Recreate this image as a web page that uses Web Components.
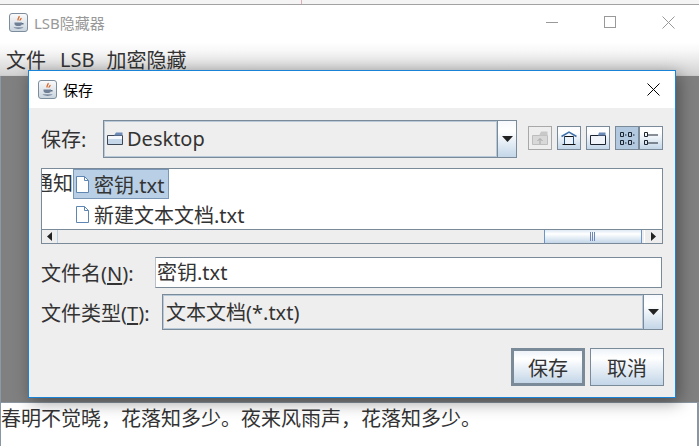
<!DOCTYPE html>
<html>
<head>
<meta charset="utf-8">
<title>LSB隐藏器</title>
<style>
  html, body { margin: 0; height: 100%; overflow: hidden; background: #fff; }
  body { font-family: "Noto Sans", "Noto Sans CJK SC", sans-serif; }
</style>
</head>
<body>
<lsb-window></lsb-window>

<script>
const JAVA_ICON = `
  <svg width="20" height="20" viewBox="0 0 20 20">
    <defs><linearGradient id="jg" x1="0" y1="0" x2="0" y2="1">
      <stop offset="0" stop-color="#fbfbfb"/><stop offset="1" stop-color="#c9d4de"/>
    </linearGradient></defs>
    <rect x="0.5" y="0.5" width="18" height="18" rx="2.5" fill="url(#jg)" stroke="#7d8d9d"/>
    <path d="M10 3c1 1.500-2 2.500-.8 4.500M12 5c.5 1-1.500 1.500-.8 2.700" fill="none" stroke="#d8662a" stroke-width="1.300"/>
    <path d="M5.500 9.500h7.500v1.200c0 1.600-1.400 2.300-3.700 2.300s-3.800-.7-3.800-2.300z" fill="#6f7f96"/>
    <path d="M13 10h1.500v1.500H13M4.500 14.500h10c-1 1.500-9 1.500-10 0z" fill="#5a6b85"/>
  </svg>`;

// title bar + menu bar + grey content + text area of the main window
class LsbWindow extends HTMLElement {
  constructor() {
    super();
    this.attachShadow({ mode: 'open' });
  }

  connectedCallback() {
    this.shadowRoot.innerHTML = `
      <style>
        :host { display: flex; flex-direction: column; height: 446px; position: relative; color: #333; }
        .strip { height: 4px; background: linear-gradient(#e3aab8, #e3aab8) 301px 0 / 1px 100% no-repeat #f4f4f4; border-bottom: 1px solid #a2a2a2; }
        .title { height: 37px; display: flex; align-items: center; padding: 0 2px 2px 9px; box-sizing: border-box; gap: 5px; background: #fff; color: #999; font-size: 15px; flex: none; }
        .title span { flex: 1; }
        .caps { display: flex; align-items: center; }
        .caps div { width: 58px; height: 30px; display: flex; align-items: center; justify-content: center; }
        .menu { height: 34px; flex: none; display: flex; gap: 14px; padding: 2px 6px 0; align-items: center; font-size: 20px; color: #333;
                background: linear-gradient(#fff 0, #f8f8f8 25%, #d2d2d2 100%); border-bottom: 1px solid #ccc; box-sizing: border-box; }
        .menu .lsb { margin-right: -2px; }
        .gray { flex: 1; background: #808080; border-left: 1px solid #8a9aaa; }
        .text { height: 44px; flex: none; background: #fff; border: 1px solid #8a96a2; border-width: 1px 2px 0 1px; box-sizing: border-box; font-size: 20px; line-height: 32px; color: #333; white-space: nowrap; }
        save-dialog { position: absolute; left: 28px; top: 70px; }
      </style>
      <div class="strip"></div>
      <div class="title">
        ${JAVA_ICON}
        <span>LSB隐藏器</span>
        <div class="caps">
          <div><svg width="13" height="13"><path d="M0 6.500h12" stroke="#999"/></svg></div>
          <div><svg width="13" height="13"><rect x=".5" y=".5" width="11" height="11" fill="none" stroke="#999"/></svg></div>
          <div><svg width="13" height="13"><path d="M.5.500l12 12M12.500.500l-12 12" stroke="#999" fill="none"/></svg></div>
        </div>
      </div>
      <div class="menu"><span>文件</span><span class="lsb">LSB</span><span>加密隐藏</span></div>
      <div class="gray"></div>
      <div class="text">春明不觉晓，花落知多少。夜来风雨声，花落知多少。</div>
      <save-dialog></save-dialog>
    `;
  }
}

class ComboBox extends HTMLElement {
  constructor() {
    super();
    this.attachShadow({ mode: 'open' });
  }

  connectedCallback() {
    this.shadowRoot.innerHTML = `
      <style>
        :host { display: flex; box-sizing: border-box; border: 1px solid #7a8a99; background: #eee; font-size: 20px; color: #333; }
        .value { flex: 1; display: flex; align-items: center; gap: 4px; border: 1px solid #b8c9d9; padding: 0 0 2px 2px; min-width: 0; white-space: nowrap; }
        .arrow { width: 18px; flex: none; border-left: 1px solid #7a8a99; display: flex; align-items: center; justify-content: center;
                 background: linear-gradient(#f6f9fc, #fff 30%, #c3d6e8); }
      </style>
      <div class="value"><slot></slot></div>
      <div class="arrow"><svg width="11" height="6"><path d="M0 0h11L5.500 6z" fill="#222"/></svg></div>
    `;
  }
}

class ToolButton extends HTMLElement {
  constructor() {
    super();
    this.attachShadow({ mode: 'open' });
  }

  connectedCallback() {
    const bg = this.hasAttribute('disabled') ? '#eee'
      : this.hasAttribute('pressed') ? 'linear-gradient(#b2c9e0, #b2c9e0)'
      : 'linear-gradient(#fbfcfe, #fff 25%, #c3d6e8)';
    const line = this.hasAttribute('disabled') ? '#a8a8a8' : '#7a8a99';
    this.shadowRoot.innerHTML = `
      <style>
        :host { display: flex; box-sizing: border-box; width: 24px; height: 24px; border: 1px solid ${line}; background: ${bg}; align-items: center; justify-content: center; }
      </style>
      <slot></slot>
    `;
  }
}

class FileRow extends HTMLElement {
  constructor() {
    super();
    this.attachShadow({ mode: 'open' });
  }

  connectedCallback() {
    const sel = this.hasAttribute('selected');
    this.shadowRoot.innerHTML = `
      <style>
        :host { display: inline-flex; box-sizing: border-box; height: 30px; align-items: center; gap: 5px; padding: 0 4px 0 2px; font-size: 20px; color: #333; white-space: nowrap;
                border: 1px solid ${sel ? '#7a97b8' : 'transparent'}; background: ${sel ? '#b8cfe5' : 'transparent'}; }
      </style>
      <svg width="13" height="17" viewBox="0 0 13 17">
        <path d="M.5.500h8l4 4v12H.5z" fill="#fff" stroke="#5f86b3"/>
        <path d="M8.500.500v4h4" fill="none" stroke="#5f86b3"/>
      </svg>
      <slot></slot>
    `;
  }
}

class HScroll extends HTMLElement {
  constructor() {
    super();
    this.attachShadow({ mode: 'open' });
  }

  connectedCallback() {
    this.shadowRoot.innerHTML = `
      <style>
        :host { display: flex; height: 14px; background: #eee; border-top: 1px solid #7a8a99; }
        .btn { width: 15px; flex: none; display: flex; align-items: center; justify-content: center; background: #eee; border-right: 1px solid #b8cfe5; }
        .btn.r { border-left: 1px solid #fff; border-right: 0; margin-left: 2px; width: 17px; }
        .track { flex: 1; }
        .thumb { width: 98px; flex: none; box-sizing: border-box; border: 1px solid #6d94c6; border-width: 0 1px; display: flex; align-items: center; justify-content: center;
                 background: linear-gradient(#dfe9f4, #fff 30%, #c3d6e8); }
      </style>
      <div class="btn"><svg width="5" height="9"><path d="M5 0v9L0 4.500z" fill="#222"/></svg></div>
      <div class="track"></div>
      <div class="thumb"><svg width="6" height="9"><path d="M.5 0v9M2.500 0v9M4.500 0v9" stroke="#6d86b5"/></svg></div>
      <div class="btn r"><svg width="5" height="9"><path d="M0 0v9l5-4.500z" fill="#222"/></svg></div>
    `;
  }
}

class SwingButton extends HTMLElement {
  constructor() {
    super();
    this.attachShadow({ mode: 'open' });
  }

  connectedCallback() {
    const width = this.hasAttribute('default') ? 3 : 1;
    this.shadowRoot.innerHTML = `
      <style>
        :host { display: flex; box-sizing: border-box; width: 74px; height: 38px; align-items: center; justify-content: center; font-size: 20px; color: #333;
                border: ${width}px solid #7a8a99; background: linear-gradient(#eef3f9, #fff 25%, #c3d6e8); }
      </style>
      <slot></slot>
    `;
  }
}

class SaveDialog extends HTMLElement {
  constructor() {
    super();
    this.attachShadow({ mode: 'open' });
  }

  connectedCallback() {
    this.shadowRoot.innerHTML = `
      <style>
        :host { display: flex; flex-direction: column; box-sizing: border-box; width: 648px; height: 328px; border: 1px solid #1883d7; background: #eee; color: #333; box-shadow: 3px 4px 16px rgba(0,0,0,.4); }
        .head { height: 37px; flex: none; background: #fff; display: flex; align-items: center; padding: 0 15px 0 9px; gap: 5px; color: #000; font-size: 15px; }
        .head span { flex: 1; }
        .body { flex: 1; display: flex; flex-direction: column; padding: 12px 12px 0 12px; font-size: 20px; }
        .look { display: flex; align-items: center; height: 38px; }
        .look label { width: 62px; flex: none; padding-bottom: 2px; }
        .look combo-box { width: 415px; height: 38px; }
        .tools { display: flex; margin: 0 0 2px 11px; }
        .tools tool-button + tool-button { margin-left: 5px; }
        .tools tool-button.join { margin-left: 0; }
        .list { margin-top: 10px; height: 76px; box-sizing: border-box; border: 1px solid #7a8a99; background: #fff; display: flex; flex-direction: column; width: 622px; }
        .rows { flex: 1; display: grid; grid-template-columns: 31px 1fr; grid-auto-rows: 30px; align-content: start; }
        .clip { overflow: hidden; direction: rtl; white-space: nowrap; font-size: 20px; line-height: 30px; }
        .field { display: flex; align-items: center; margin-top: 13px; height: 31px; }
        .field label { width: 114px; flex: none; white-space: nowrap; }
        .input { width: 507px; height: 31px; box-sizing: border-box; border: 1px solid #7a8a99; border-left-color: #b8c0c8; background: #fff; padding-left: 1px; line-height: 30px; }
        .type { display: flex; align-items: center; margin-top: 6px; height: 36px; }
        .type label { width: 121px; flex: none; white-space: nowrap; }
        .type combo-box { width: 502px; height: 36px; }
        .actions { display: flex; justify-content: flex-end; gap: 5px; margin-top: 18px; width: 623px; }
        u { text-underline-offset: 2px; }
      </style>
      <div class="head">${JAVA_ICON}<span>保存</span>
        <svg width="13" height="13"><path d="M.5.500l12 12M12.500.500l-12 12" stroke="#000" fill="none"/></svg>
      </div>
      <div class="body">
        <div class="look">
          <label>保存:</label>
          <combo-box>
            <svg width="16" height="13" viewBox="0 0 16 13">
              <path d="M.5 3.500h15v9H.5z" fill="#c6d7e9" stroke="#3c4654"/>
              <path d="M9 .500h6.500v3H7z" fill="#6c88b5"/>
              <path d="M1 4h14v3H1z" fill="#f4f7fb"/>
            </svg><span>Desktop</span>
          </combo-box>
          <div class="tools">
            <tool-button disabled>
              <svg width="16" height="14" viewBox="0 0 16 14">
                <path d="M.5 4.500h15v9H.5z" fill="#d8d8d8" stroke="#bdbdbd"/>
                <path d="M9 .500h6.500v4H7z" fill="#c8c8c8"/>
                <path d="M8 13V8M5.500 10L8 7.500 10.500 10" stroke="#a6a6a6" fill="none"/>
              </svg>
            </tool-button>
            <tool-button>
              <svg width="16" height="15" viewBox="0 0 16 15">
                <path d="M.5 5.500L8 1l7.500 4.500" fill="none" stroke="#3d6fa8" stroke-width="1.500"/>
                <path d="M3.500 5.500v8M12.500 5.500v8" stroke="#1f4f86" fill="none"/>
                <path d="M3.500 5.500h9" stroke="#111"/>
                <path d="M4 6h8v7H4z" fill="#eef3f9"/>
                <path d="M1.500 13.500h13" stroke="#111"/>
              </svg>
            </tool-button>
            <tool-button>
              <svg width="16" height="13" viewBox="0 0 16 13">
                <path d="M.5 3.500h15v9H.5z" fill="#f1f5fa" stroke="#1c2430"/>
                <path d="M9 .500h6.500v3H8z" fill="#6c88b5"/>
              </svg>
            </tool-button>
            <tool-button pressed>
              <svg width="15" height="13" viewBox="0 0 15 13" fill="none" stroke="#1c2430">
                <path d="M.5.500h3v4h-3zM8.500.500h3v4h-3zM.5 8.500h3v4h-3zM8.500 8.500h3v4h-3z"/>
                <path d="M5 3h1.500M13 3h1.500M5 11h1.500M13 11h1.500"/>
              </svg>
            </tool-button>
            <tool-button class="join">
              <svg width="15" height="13" viewBox="0 0 15 13" fill="none" stroke="#1c2430">
                <path d="M.5.500h3v4h-3zM.5 8.500h3v4h-3z"/>
                <path d="M4 3h10M4 11h10"/>
              </svg>
            </tool-button>
          </div>
        </div>
        <div class="list">
          <div class="rows">
            <div class="clip">通知</div>
            <div><file-row selected>密钥.txt</file-row></div>
            <div></div>
            <div><file-row>新建文本文档.txt</file-row></div>
          </div>
          <h-scroll></h-scroll>
        </div>
        <div class="field">
          <label>文件名(<u>N</u>):</label>
          <div class="input">密钥.txt</div>
        </div>
        <div class="type">
          <label>文件类型(<u>T</u>):</label>
          <combo-box>文本文档(*.txt)</combo-box>
        </div>
        <div class="actions">
          <swing-button default>保存</swing-button>
          <swing-button>取消</swing-button>
        </div>
      </div>
    `;
  }
}

customElements.define('combo-box', ComboBox);
customElements.define('tool-button', ToolButton);
customElements.define('file-row', FileRow);
customElements.define('h-scroll', HScroll);
customElements.define('swing-button', SwingButton);
customElements.define('save-dialog', SaveDialog);
customElements.define('lsb-window', LsbWindow);
</script>
</body>
</html>
